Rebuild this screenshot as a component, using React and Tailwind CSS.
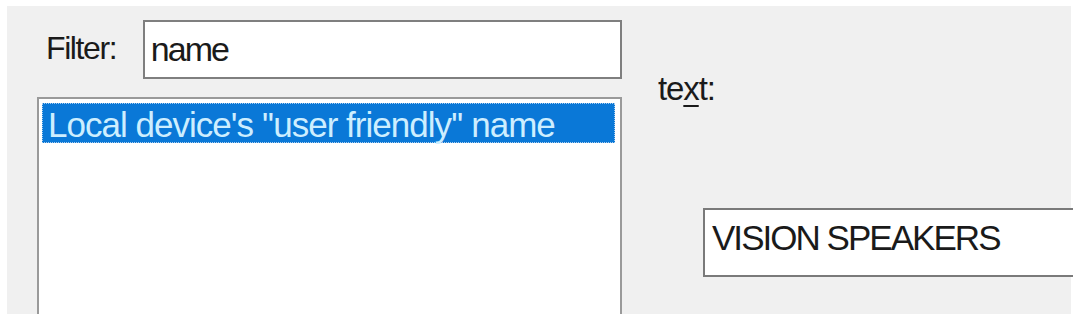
import React from "react";

const font = { fontFamily: '"Liberation Sans", Arial, sans-serif' };

export default function App() {
  return (
    <div className="w-[1073px] h-[318px] bg-white overflow-hidden" style={font}>
      <div className="ml-[7px] mt-[6px] w-[1064px] h-[308px] bg-[#f0f0f0] flex items-start">
        {/* Left column */}
        <div className="ml-[30px] w-[585px] h-[308px] flex flex-col">
          <div className="mt-[14px] h-[59px] flex items-start">
            <div className="w-[106px] pl-[9px] pt-[12px] text-[32px] leading-[32px] tracking-[-1.4px] text-[#1a1a1a]">
              Filter:
            </div>
            <div className="w-[480px] h-[59px] border-2 border-[#7f7f7f] bg-white pl-[6px] pt-[10px] text-[34px] leading-[34px] tracking-[-2px] text-[#1a1a1a]">
              name
            </div>
          </div>
          <div className="mt-[18px] flex-1 border-2 border-b-0 border-[#9a9a9a] bg-white pl-[3px] pt-[4px] pr-[5px]">
            <div className="h-[40px] bg-[#0a78d7] border border-dotted border-[#a9cdee] pl-[5px] pt-[3px] text-[35px] leading-[36px] tracking-[-0.98px] text-[#cdeeff] whitespace-nowrap">
              Local device's ''user friendly'' name
            </div>
          </div>
        </div>
        {/* Right column */}
        <div className="ml-[36px] flex flex-col">
          <div className="mt-[66px] text-[33px] leading-[33px] tracking-[-1.1px] text-[#1a1a1a]">
            te<span className="underline decoration-2 underline-offset-[5px]">x</span>t:
          </div>
          <div className="mt-[103px] ml-[45px] w-[400px] h-[69px] border-2 border-[#7a7a7a] bg-white pl-[7px] pt-[10px] text-[35px] leading-[35px] tracking-[-1.97px] text-[#1a1a1a] whitespace-nowrap">
            VISION SPEAKERS
          </div>
        </div>
      </div>
    </div>
  );
}
